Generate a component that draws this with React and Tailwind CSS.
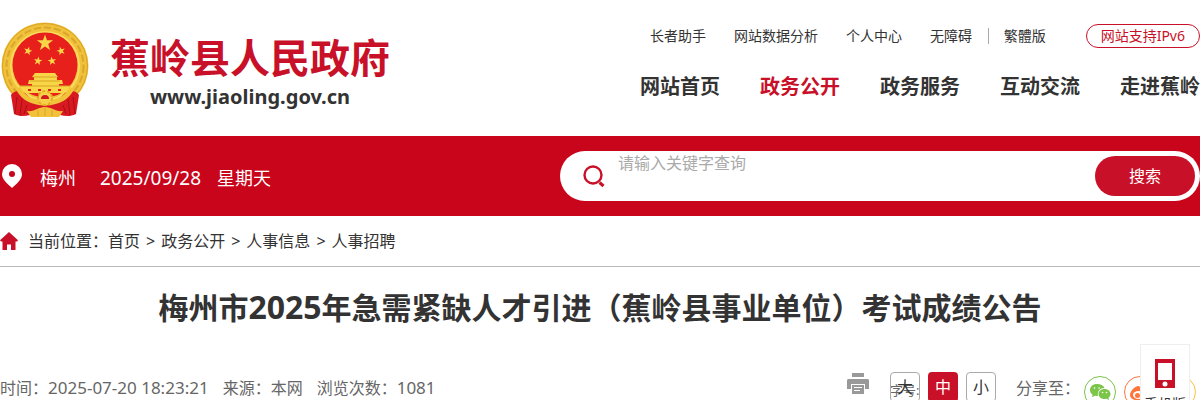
const topLinks = ["长者助手", "网站数据分析", "个人中心", "无障碍"]

const navItems = ["网站首页", "政务公开", "政务服务", "互动交流", "走进蕉岭"]

const crumbs = ["首页", "政务公开", "人事信息", "人事招聘"]

const STAR = "M0-10 2.4-3.2 9.5-3.1 3.8 1.2 5.9 8.1 0 4 -5.9 8.1 -3.8 1.2 -9.5-3.1 -2.4-3.2Z"

function Emblem() {
  return (
    <svg viewBox="0 0 90 98" className="h-[98px] w-[90px] shrink-0" aria-hidden="true">
      <circle cx="45" cy="45" r="43.5" fill="#f0c13a" />
      <circle cx="45" cy="45" r="42.5" fill="none" stroke="#d9a224" strokeWidth="1" />
      <circle cx="45" cy="45" r="38.5" fill="none" stroke="#dba62a" strokeWidth="2" strokeDasharray="7 3" />
      <circle cx="45" cy="45" r="34" fill="none" stroke="#f9dc5c" strokeWidth="2" />
      <circle cx="45" cy="44" r="32.5" fill="#e8201c" />
      <g fill="#f9d648">
        <path d={STAR} transform="translate(45 22) scale(.85)" />
        <path d={STAR} transform="translate(28 30) rotate(15) scale(.45)" />
        <path d={STAR} transform="translate(61 30) rotate(-15) scale(.45)" />
        <path d={STAR} transform="translate(38 40) rotate(10) scale(.45)" />
        <path d={STAR} transform="translate(52 40) rotate(-10) scale(.45)" />
        <path d="M35 52h20l3 4h-1v3h5l1 4h-4v2h11v7H20v-7h12v-2h-4l1-4h5v-3h-2z" />
      </g>
      <path d="M33 56h24M30 60h30M20 65h50" stroke="#d9a224" />
      <path d="M28 69h3m7 0h3m7 0h3m7 0h3" stroke="#e2231a" strokeWidth="2" />
      <path d="M11 74c3-5 9-5 14-2l8 8 12 5 12-5 8-8c5-3 11-3 14 2l-3 19c-6 3-11 2-16 1H30c-5 1-10 2-16-1z" fill="#d81a20" />
      <path d="M18 67c5 10 14 15 27 15s22-5 27-15" fill="none" stroke="#f2c33a" strokeWidth="5" />
      <circle cx="45" cy="77" r="7" fill="#f7d04a" stroke="#e5ad25" strokeWidth="2" strokeDasharray="3 2" />
      <path d="M41 78a4 4 0 0 1 8 0z" fill="#d31920" />
      <path d="M27 90c8 1 11-4 18-4s10 5 18 4l-4 6H31z" fill="#f2c33a" />
      <path d="M45 87v8m-7-6v6m14-6v6" stroke="#d9a224" />
      <path d="M17 76l-2 17M22 78l-2 16M73 76l2 17M68 78l2 16M27 84l-3 9M63 84l3 9" stroke="#a80f18" fill="none" />
    </svg>
  )
}

function Header() {
  return (
    <header className="flex h-[136px] justify-between">
      <a href="#" className="flex pt-[21px]">
        <Emblem />
        <span className="ml-5 flex flex-col items-center pt-3">
          <span className="text-[40px] leading-[50px] font-bold text-[#c81128]">蕉岭县人民政府</span>
          <span className="text-[20px] leading-7 font-bold text-[#333]">www.jiaoling.gov.cn</span>
        </span>
      </a>
      <div className="pt-6">
        <div className="flex items-center justify-between pl-[10px] text-[14px] leading-6">
          <div className="flex gap-7">
            {topLinks.map((label) => (
              <a key={label} href="#">{label}</a>
            ))}
          </div>
          <div className="flex items-center">
            <span className="mr-[15px] h-4 w-px bg-[#aaa]" />
            <a href="#">繁體版</a>
          </div>
          <a href="#" className="ml-6 rounded-full border border-[#c81128] px-[14px] leading-[22px] text-[#c81128]">
            网站支持IPv6
          </a>
        </div>
        <nav className="mt-6 flex gap-10 text-[20px] leading-[30px] font-bold">
          {navItems.map((item) => (
            <a key={item} href="#" className={item === "政务公开" ? "text-[#c81128]" : ""}>{item}</a>
          ))}
        </nav>
      </div>
    </header>
  )
}

function SearchBar() {
  return (
    <div className="flex h-20 items-center justify-between bg-[#c9051c] text-white">
      <div className="flex items-center text-[18px] leading-6">
        <svg viewBox="0 0 24 26" className="h-[26px] w-6" aria-hidden="true">
          <path fillRule="evenodd" d="M12 1a10 10 0 0 0-10 10c0 6 6 10 10 14 4-4 10-8 10-14A10 10 0 0 0 12 1zm0 7a3 3 0 1 1 0 6 3 3 0 0 1 0-6z" fill="#fff" />
        </svg>
        <span className="mt-1 ml-4">梅州</span>
        <span className="mt-1 ml-6 text-[19px]">2025/09/28</span>
        <span className="mt-1 ml-4">星期天</span>
      </div>
      <form className="flex h-[50px] w-[640px] items-center rounded-full bg-white pr-[5px]" onSubmit={(e) => e.preventDefault()}>
        <svg viewBox="0 0 24 24" className="mr-3 ml-[22px] h-6 w-6 shrink-0" fill="none" stroke="#c81128" strokeWidth="2.4" aria-hidden="true">
          <circle cx="11" cy="11" r="8.5" />
          <path d="M17.5 18.5l4 3.5" strokeWidth="3" />
        </svg>
        <input
          type="text"
          aria-label="请输入关键字查询"
          placeholder="请输入关键字查询"
          className="h-[46px] min-w-0 flex-1 pb-[26px] pl-0 text-[16px] leading-5 text-[#333] outline-none placeholder:text-[#aaa]"
        />
        <button type="submit" className="h-10 w-[100px] rounded-full bg-[#c81128] text-[16px]">搜索</button>
      </form>
    </div>
  )
}

function Breadcrumb() {
  return (
    <nav className="flex h-[51px] items-center border-b border-[#bbb] text-[16px]">
      <svg viewBox="0 0 18 18" className="h-[18px] w-[18px]" aria-hidden="true">
        <path d="M9 0l9 8.2-1 1.3h-1.500V18H11v-5.500H7V18H2.500V9.500H1L0 8.200z" fill="#c81128" />
      </svg>
      <span className="ml-[10px]">当前位置：</span>
      {crumbs.map((crumb, i) => (
        <span key={crumb} className="flex">
          {i > 0 && <span className="mx-[6px]">&gt;</span>}
          <a href="#">{crumb}</a>
        </span>
      ))}
    </nav>
  )
}

function FontSizes() {
  return (
    <div className="relative ml-[21px] flex gap-2 text-[16px]">
      <span className="absolute top-[6px] left-0 text-[13px] leading-6 text-[#666]">字号:</span>
      <button className="relative h-[30px] w-[30px] rounded-sm border border-[#aaa] text-[#333]">大</button>
      <button className="relative h-[30px] w-[30px] rounded-sm bg-[#c81128] text-white">中</button>
      <button className="relative h-[30px] w-[30px] rounded-sm border border-[#aaa] text-[#333]">小</button>
    </div>
  )
}

function ShareLinks() {
  return (
    <div className="mt-1 flex gap-2">
      <a href="#" aria-label="微信">
        <svg viewBox="0 0 32 32" className="h-8 w-8">
          <circle cx="16" cy="16" r="15.500" fill="none" stroke="#7bc549" />
          <path d="M13 8c-4.400 0-7 2.700-7 6 0 2 1 3.600 2.600 4.700L8 21.200l3-1.500 3 .3c-1-4.600 2-8 6.500-8C19.500 9.500 16.500 8 13 8z" fill="#7bc549" />
          <path d="M20.500 13c-3.500 0-6 2.300-6 5s2.500 5 6 5l2-.3 2.600 1.300-.6-2.200c1.300-1 2-2.300 2-3.800 0-2.700-2.500-5-6-5z" fill="#7bc549" />
          <path d="M10.500 12h.1m4.400 0h.1m3.400 4.500h.1m3.900 0h.1" stroke="#fff" strokeWidth="1.600" strokeLinecap="round" />
        </svg>
      </a>
      <a href="#" aria-label="微博">
        <svg viewBox="0 0 32 32" className="h-8 w-8">
          <circle cx="16" cy="16" r="15.500" fill="none" stroke="#ff763b" />
          <path d="M14 10c-4 1-8 5.500-8 9 0 3.500 4 5.500 9 5.500s9-3 9-6c0-2-1.500-3-3-3.500 1-3-2-3.500-5-2 .5-2-.5-3.300-2-3z" fill="#ff763b" />
          <ellipse cx="14.500" cy="19" rx="5.500" ry="4" fill="#fff" />
          <circle cx="13.500" cy="19.500" r="2.500" fill="#ff763b" />
          <path d="M19 8c4-1 7 2 6 6" fill="none" stroke="#ff763b" strokeWidth="2" />
        </svg>
      </a>
      <a href="#" aria-label="QQ空间">
        <svg viewBox="0 0 32 32" className="h-8 w-8">
          <circle cx="16" cy="16" r="15.500" fill="none" stroke="#fdbe3d" />
          <path d={STAR} transform="translate(16 16)" fill="#fdbe3d" />
        </svg>
      </a>
    </div>
  )
}

function Article() {
  return (
    <main>
      <h1 className="mt-[18px] text-center text-[30px] leading-[44px] font-bold">
        梅州市<span className="text-[32px]">2025</span>年急需紧缺人才引进（蕉岭县事业单位）考试成绩公告
      </h1>
      <div className="mt-[42px] flex items-start justify-between text-[16px] text-[#666]">
        <div className="flex gap-[14px] pt-1 leading-6">
          <span>时间：<time className="text-[17px]">2025-07-20 18:23:21</time></span>
          <span>来源：本网</span>
          <span>浏览次数：<span className="text-[17px]">1081</span></span>
        </div>
        <div className="flex items-start pr-1">
          <button aria-label="打印" className="mt-px">
            <svg viewBox="0 0 22 22" className="h-[22px] w-[22px]">
              <path d="M5 0h12v4H5zM1 6h20l1 1v9h-4v-5H4v5H0V7z" fill="#999" />
              <path fillRule="evenodd" d="M5 12h12v9H5zm2 2v1h8v-1zm0 3v1h6v-1z" fill="#999" />
            </svg>
          </button>
          <FontSizes />
          <span className="mt-1 mr-1 ml-5 leading-6">分享至：</span>
          <ShareLinks />
        </div>
      </div>
    </main>
  )
}

function MobileTab() {
  return (
    <a href="#" className="fixed top-[344px] right-[10px] flex w-[50px] flex-col items-center border border-[#eee] bg-white pt-[14px] text-[14px]">
      <svg viewBox="0 0 20 29" className="h-[29px] w-5" aria-hidden="true">
        <path fillRule="evenodd" d="M0 0h20v29H0zm3 4v17h14V4z" fill="#c81128" />
        <circle cx="10" cy="25" r="2.500" fill="#fff" />
      </svg>
      <span className="mt-1 leading-6">手机版</span>
    </a>
  )
}

export default function App() {
  return (
    <div className="h-screen overflow-hidden bg-white font-['Noto_Sans','Noto_Sans_CJK_SC',sans-serif] text-[#333]">
      <Header />
      <SearchBar />
      <Breadcrumb />
      <Article />
      <MobileTab />
    </div>
  )
}
